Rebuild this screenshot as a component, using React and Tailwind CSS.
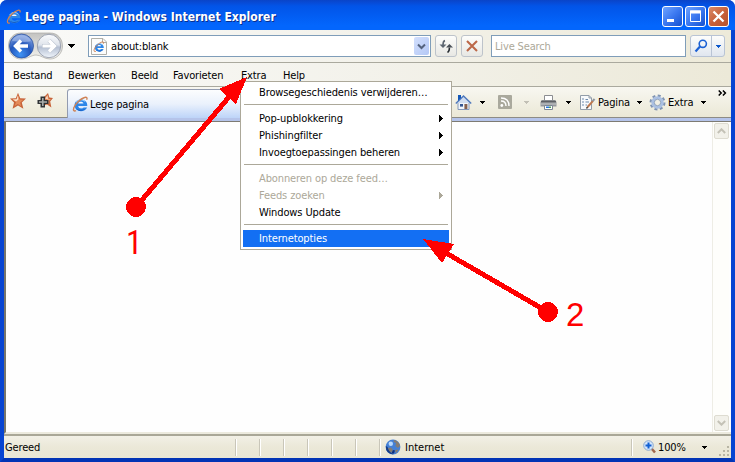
import React from 'react';

function IELogo({ className = '' }) {
  return (
    <svg className={`shrink-0 ${className}`} viewBox="0 0 16 16" fill="none">
      <path d="M14.4 9.3H5.8C6 12 9.8 12.2 10.9 10.8H14.2C12.4 15.8 2.6 15.6 2.4 8.8C2.4 1.4 14.8 1.2 14.4 9.3Z" fill="#2d86e8" />
      <path d="M3.2 11C4.6 14.6 11 15 13.2 11.6C10.6 13.6 5.6 13.6 3.2 11Z" fill="#175cc0" />
      <path d="M5.8 7.1H10.8C10.6 4.9 6.1 4.8 5.8 7.1Z" fill="#f4f8ff" />
      <path d="M3.8 6C5.6 2.8 10.4 2.8 12.4 5.2" stroke="#9bd2ff" strokeWidth="1" />
      <path d="M13.8 3.6C14.8 1.4 13.6.8 11.8 1.4C7.8 2.6 3 7.4 1.7 11C.9 13.6 1.8 14.6 3.8 13.8" stroke="#cf8254" strokeWidth="1.3" />
    </svg>
  );
}

function Down({ className = 'text-black' }) {
  return (
    <svg className={`h-[3px] w-[5px] shrink-0 ${className}`} viewBox="0 0 5 3" shapeRendering="crispEdges">
      <path d="M0 0H5V1H4V2H3V3H2V2H1V1H0Z" fill="currentColor" />
    </svg>
  );
}

function BigDown({ className = '' }) {
  return (
    <svg className={`h-[4px] w-[7px] shrink-0 ${className}`} viewBox="0 0 7 4" shapeRendering="crispEdges">
      <path d="M0 0H7V1H6V2H5V3H4V4H3V3H2V2H1V1H0Z" fill="currentColor" />
    </svg>
  );
}

function Star({ add }) {
  return (
    <svg className="h-[18px] w-[18px] shrink-0" viewBox="0 0 18 18">
      {add ? (
        <>
          <path d="M12 1L13.4 5.6L17 6L14.2 9.4L15.4 15.4L11 12.6L6 14L7 6Z" fill="#c8643a" />
          <path d="M12 3.4L12.6 7H15L12.6 9L13.4 12.6L10.6 10Z" fill="#f0a778" />
          <path d="M11.6 3L12 7L9.4 7.6L9.4 6Z" fill="#f8d7bd" />
          <path d="M4.5 4.5H9V8H12.5V12H9V15.5H4.5V12H1.5V8H4.5Z" fill="#2f3235" />
          <path d="M6 6H7.6V9.2H11V10.8H7.6V14H6V10.8H3V9.2H6Z" fill="#a9adab" />
        </>
      ) : (
        <>
          <path d="M9 .8L11.2 6.2L17 6.6L12.8 10.4L14.4 16.8L9 13.6L3.6 16.8L5 10.6L1 6.6L6.8 6.2Z" fill="#c8643a" />
          <path d="M9 3L10.4 7.4L14.4 7.7L11.2 10.4L12.2 14.2L8.8 12L5.6 14L7 10L3.6 7.6L7.6 7.3Z" fill="#e38a59" />
          <path d="M3.6 7.4L7.6 7.3L9 3.2L9.4 7.4L7 9.4Z" fill="#fbe0ca" />
        </>
      )}
    </svg>
  );
}

function TitleButton({ close, children }) {
  return (
    <div className={`flex h-[21px] w-[21px] items-center justify-center rounded-[3px] border border-white ${close ? 'bg-linear-to-br from-[#d98a68] via-[#c8613b] to-[#b5532e]' : 'bg-linear-to-br from-[#6fa3ff] via-[#3b78f0] to-[#1450cf]'}`}>
      <svg className="h-[19px] w-[19px]" viewBox="0 0 19 19" fill="none">{children}</svg>
    </div>
  );
}

function TitleBar() {
  return (
    <div className="flex h-[30px] shrink-0 items-center bg-linear-to-b from-[#0a44c8] from-0% via-[#0254e8] via-20% to-[#0366fd] to-85% pl-[6px] pr-[6px] pt-[3px]">
      <IELogo className="h-[16px] w-[16px]" />
      <div className="ml-[3px] flex-1 whitespace-nowrap pt-px font-['DejaVu_Sans_Condensed','DejaVu_Sans',sans-serif] text-[12px] font-bold leading-[16px] tracking-[0.03px] text-white [text-shadow:1px_1px_0_#0a2f8c] [font-stretch:condensed]">
        Lege pagina - Windows Internet Explorer
      </div>
      <div className="flex gap-[2px]">
        <TitleButton><path d="M4 13.5H11" stroke="white" strokeWidth="3" /></TitleButton>
        <TitleButton><path d="M4.5 4H14.5V14.5H4.5Z" stroke="white" /><path d="M4 5H15" stroke="white" strokeWidth="3" /></TitleButton>
        <TitleButton close><path d="M4.5 4.5L14.5 14.5M14.5 4.5L4.5 14.5" stroke="white" strokeWidth="2.3" /></TitleButton>
      </div>
    </div>
  );
}

function NavButtons() {
  return (
    <svg className="h-[28px] w-[56px] shrink-0" viewBox="0 0 56 28" fill="none">
      <defs>
        <radialGradient id="back" cx=".45" cy=".85" r=".8">
          <stop stopColor="#3f93f5" /><stop offset=".55" stopColor="#2357bd" /><stop offset="1" stopColor="#7f9fdd" />
        </radialGradient>
        <linearGradient id="fwd" x1="0" y1="0" x2="0" y2="1">
          <stop stopColor="#fbfcfd" /><stop offset=".45" stopColor="#dfe4ec" /><stop offset=".55" stopColor="#b4bfd2" /><stop offset="1" stopColor="#f1f6fc" />
        </linearGradient>
        <linearGradient id="tray" x1="0" y1="0" x2="0" y2="1">
          <stop stopColor="#c3c3c1" /><stop offset="1" stopColor="#f3f2ed" />
        </linearGradient>
      </defs>
      <path d="M13 1H42C50 1 54.5 7 54.5 14C54.5 21 49 27 42 27C36 27 33 23 28 23C23 23 20 27 13 27C6 27 .5 21 .5 14C.5 7 5 1 13 1Z" fill="url(#tray)" stroke="#aaaaa8" strokeWidth=".7" />
      <circle cx="13.5" cy="14" r="12" fill="url(#back)" stroke="#20479a" strokeWidth=".7" />
      <path d="M4 9C7 2 19 1 23 9C18 11 9 9 4 9Z" fill="#c5d4f3" opacity=".45" />
      <path d="M20 14H8M13 8.5L7.5 14L13 19.5" stroke="white" strokeWidth="3.4" />
      <circle cx="41" cy="14" r="11.7" fill="url(#fwd)" stroke="#8b93a3" strokeWidth=".8" />
      <path d="M34 14H46M41 8.5L46.5 14L41 19.5" stroke="#b3bccb" strokeWidth="4.2" />
      <path d="M34.5 14H46M41 8.5L46.5 14L41 19.5" stroke="white" strokeWidth="3.2" />
    </svg>
  );
}

function ToolButton({ children }) {
  return (
    <div className="flex h-[22px] w-[22px] items-center justify-center rounded-[3px] border border-[#bdc3ca] bg-linear-to-b from-[#fdfdfb] to-[#e8e8e4]">
      {children}
    </div>
  );
}

function NavBar() {
  return (
    <div className="flex h-[33px] shrink-0 items-center border-b border-[#aaa99e] bg-linear-to-r from-[#fafaf8] via-[#f3f2eb] to-[#edead9] pl-[4px] pr-[6px]">
      <NavButtons />
      <BigDown className="ml-[4px] text-black" />
      <div className="ml-[13px] flex h-[22px] w-[343px] items-center border border-[#7f9db9] bg-white pl-[2px] pr-px">
        <div className="grid h-[17px] w-[16px] shrink-0 place-items-center">
          <svg className="col-start-1 row-start-1 h-[17px] w-[16px]" viewBox="0 0 16 17" fill="none">
            <path d="M.5.5H12L15.5 4V16.5H.5Z" fill="#fcfcfb" stroke="#b0b0aa" /><path d="M11.5.5V4.5H15.5" stroke="#b0b0aa" />
          </svg>
          <IELogo className="col-start-1 row-start-1 mr-px mt-[2px] h-[12px] w-[12px]" />
        </div>
        <span className="ml-[4px] flex-1">about:blank</span>
        <div className="flex h-[18px] w-[15px] items-center justify-center rounded-[2px] bg-linear-to-br from-[#d2dffd] to-[#b4c8f5]">
          <svg className="h-[7px] w-[9px]" viewBox="0 0 9 7"><path d="M1 1.5L4.5 5L8 1.5" fill="none" stroke="#55637e" strokeWidth="2" /></svg>
        </div>
      </div>
      <div className="ml-[4px] flex gap-[4px]">
        <ToolButton>
          <svg className="h-[18px] w-[18px]" viewBox="0 0 18 18" fill="none">
            <path d="M8 3.6C6.4 4 6 5 6 8" stroke="#5d6670" strokeWidth="1.6" /><path d="M2.5 7.5H9.5L6 11Z" fill="#5d6670" />
            <path d="M10.4 15.2C12 14.8 12.4 13 12.4 10.5" stroke="#272c31" strokeWidth="1.6" /><path d="M9 10.5H16L12.4 7Z" fill="#4a5057" />
          </svg>
        </ToolButton>
        <ToolButton>
          <svg className="h-[14px] w-[14px]" viewBox="0 0 14 14"><path d="M2 2L12 12M12 2L2 12" fill="none" stroke="#bc6848" strokeWidth="2.1" /></svg>
        </ToolButton>
      </div>
      <div className="ml-[8px] flex h-[22px] w-[195px] items-center border border-[#7f9db9] bg-white pl-[3px] text-[#aca899]">Live Search</div>
      <div className="ml-[4px] flex h-[22px] w-[35px] items-center rounded-[3px] border border-[#b9c4d5] bg-linear-to-b from-[#fdfdfb] to-[#e0e6ef]">
        <div className="flex h-full w-[21px] items-center justify-center border-r border-[#b9c4d5]">
          <svg className="h-[14px] w-[14px]" viewBox="0 0 14 14" fill="none" stroke="#1c61d4"><circle cx="8.8" cy="4.8" r="3.6" strokeWidth="1.6" /><path d="M6 7.5L1.5 12.5" strokeWidth="2.2" /></svg>
        </div>
        <div className="flex flex-1 justify-center"><Down className="text-[#0b57cc]" /></div>
      </div>
    </div>
  );
}

function MenuBar() {
  return (
    <div className="flex h-[24px] shrink-0 items-center border-b border-[#aaa99e] bg-linear-to-r from-[#fafaf8] via-[#f3f2eb] to-[#ece9d8] pl-[9px] pt-px">
      <span className="w-[55px]">Bestand</span>
      <span className="w-[63px]">Bewerken</span>
      <span className="w-[42px]">Beeld</span>
      <span className="w-[68px]">Favorieten</span>
      <span className="w-[42px]">Extra</span>
      <span>Help</span>
    </div>
  );
}

function TabBar() {
  return (
    <div className="flex h-[35px] shrink-0 border-b border-[#7d7b73] bg-[#b5c4ea] pb-[3px]">
      <div className="flex flex-1 border-b border-[#8d8c85] bg-linear-to-b from-[#f8f7f1] to-[#ebe8d6] pl-[5px]">
        <div className="flex items-start gap-[9px] pt-[5px]"><Star /><Star add /></div>
        <div className="ml-[13px] mt-[2px] flex h-[29px] w-[184px] items-center rounded-t-[3px] border border-b-0 border-[#929bb0] bg-linear-to-b from-[#fcfdfe] via-[#eaf1fc] to-[#bdd4f8] pl-[4px]">
          <IELogo className="h-[17px] w-[17px]" />
          <span className="ml-[1px]">Lege pagina</span>
        </div>
        <div className="ml-[204px] flex h-[30px] items-center">
          <svg className="h-[17px] w-[17px] shrink-0" viewBox="0 0 17 17" fill="none">
            <path d="M3 8H14V15.5H3Z" fill="#f1f5fb" stroke="#8498ba" />
            <path d="M8.5 2L16 9H1Z" fill="#cfdcf0" /><path d="M.8 9.5L8.5 2L16.2 9.5" stroke="#4f78bb" strokeWidth="1.4" />
            <path d="M3 1H6V4L3 7Z" fill="#1457b7" /><path d="M5 10H8V12.6H5Z" fill="#345692" /><path d="M9.4 10H12.4V15H9.4Z" fill="#84604f" />
          </svg>
          <Down className="ml-[8px] text-black" />
          <svg className="ml-[13px] h-[14px] w-[14px] shrink-0" viewBox="0 0 14 14" fill="none">
            <rect width="14" height="14" rx="1" fill="#aaa99d" /><circle cx="3.8" cy="10.5" r="1.4" fill="white" /><path d="M3 6C6 6 8 8 8 11M3 3C8 3 11 6 11 11" stroke="white" strokeWidth="1.4" />
          </svg>
          <Down className="ml-[12px] text-[#c2c0b5]" />
          <svg className="ml-[11px] h-[17px] w-[17px] shrink-0" viewBox="0 0 17 17" fill="none">
            <path d="M4.5 6V1.5H12.5V6" fill="white" stroke="#8b8d91" /><path d="M2 6H15L16.5 8V12.5H.5V8Z" fill="#96999d" /><path d="M1 7.5H16" stroke="#5d6065" strokeWidth="1.6" /><path d="M1 10H16" stroke="#c5c7c9" /><path d="M4.5 11.5H12.5V15.5H4.5Z" fill="white" stroke="#7c8795" /><path d="M6 12.5H9V14H6Z" fill="#2876de" /><path d="M9 12.5H11V14H9Z" fill="#4ba05a" />
          </svg>
          <Down className="ml-[9px] text-black" />
          <svg className="ml-[8px] h-[17px] w-[17px] shrink-0" viewBox="0 0 17 17" fill="none">
            <path d="M1.5 1.5H10L12.5 4V15.5H1.5Z" fill="#f8fafc" stroke="#929da9" /><path d="M10 1.5V4H12.5" stroke="#929da9" /><path d="M3 5H5M3 8H5M3 11H5M6.5 5.5H9M6.5 8H10M6.5 11H8" stroke="#6e8bad" /><path d="M8.6 13L14 6.8" stroke="#be784e" strokeWidth="2" /><path d="M13.6 7.2L15.6 5" stroke="#8f969e" strokeWidth="2" /><path d="M7.5 14.5L8.6 12.8" stroke="#4a4038" strokeWidth="1.4" />
          </svg>
          <span className="ml-[2px] w-[39px]">Pagina</span>
          <Down />
          <svg className="ml-[7px] h-[17px] w-[17px] shrink-0" viewBox="0 0 17 17" fill="none">
            <circle cx="8.5" cy="8.5" r="6.9" stroke="#8094b2" strokeWidth="2.2" strokeDasharray="3 2.42" />
            <circle cx="8.5" cy="8.5" r="4.8" fill="#f1efe4" stroke="#abc0e2" strokeWidth="2.8" /><circle cx="8.5" cy="8.5" r="3.2" stroke="#7991b3" strokeWidth=".8" />
          </svg>
          <span className="ml-[2px] w-[33px]">Extra</span>
          <Down />
        </div>
        <svg className="ml-[12px] mt-[3px] h-[6px] w-[9px] shrink-0" viewBox="0 0 9 6" fill="none" stroke="black" strokeWidth="1.5"><path d="M.7.5L3.2 3L.7 5.5M4.9.5L7.4 3L4.9 5.5" /></svg>
      </div>
    </div>
  );
}

function ScrollButton({ up }) {
  return (
    <div className="flex h-[16px] w-[15px] items-center justify-center rounded-[2px] border border-[#dedcd1] bg-[#f2f1ea]">
      <svg className={`h-[6px] w-[9px] ${up ? '' : 'rotate-180'}`} viewBox="0 0 9 6"><path d="M.8 5L4.5 1.3L8.2 5" fill="none" stroke="#c4c2b7" strokeWidth="2" /></svg>
    </div>
  );
}

function StatusBar() {
  return (
    <div className="flex h-[24px] shrink-0 items-center border-t-2 border-[#a9a797] bg-linear-to-b from-[#f2f0e6] via-[#ebe8d8] to-[#e9e6d5]">
      <span className="w-[231px] pl-[1px] pt-px">Gereed</span>
      {[0, 1, 2, 3, 4, 5, 6].map((n) => (
        <span key={n} className="h-[17px] w-[24px] shrink-0 border-l border-[#c9c6b9] shadow-[inset_1px_0_0_white]" />
      ))}
      <svg className="-ml-[18px] h-[16px] w-[16px] shrink-0" viewBox="0 0 16 16">
        <circle cx="8" cy="8" r="7.4" fill="#4480d6" /><path d="M9 1Q14 2 15 7L13 9L10.4 7L11 4L8.6 3ZM3 9L6 8.6L8 11L6 14Q3 12 3 9ZM10 11L13.6 10.6L11 14.4Z" fill="#857c72" /><path d="M.8 7Q.6 15 8.6 15.4Q3.4 13 2.6 8Z" fill="#153c87" /><path d="M8 11L10 11.4L9 14.6L6.4 14.4Z" fill="#12307a" /><circle cx="5.8" cy="4.8" r="2.2" fill="#b9daff" />
      </svg>
      <span className="ml-[4px] w-[226px] pt-px tracking-normal">Internet</span>
      <span className="h-[17px] w-[12px] border-l border-[#c9c6b9] shadow-[inset_1px_0_0_white]" />
      <svg className="h-[14px] w-[13px] shrink-0" viewBox="0 0 13 14" fill="none"><path d="M8.5 8.5L12 12.5" stroke="#a2684d" strokeWidth="2.5" /><circle cx="5.5" cy="5.5" r="4.8" fill="#d3e5fc" stroke="#8ba9cf" /><path d="M5.5 2.5V8.5M2.5 5.5H8.5" stroke="#1260d2" strokeWidth="2" /></svg>
      <span className="ml-[2px] w-[44px] pt-px">100%</span>
      <Down />
      <svg className="ml-auto mr-[1px] mt-[9px] h-[12px] w-[12px]" viewBox="0 0 12 12" fill="#b8b5a4"><path d="M9 0h2v2H9zM5 4h2v2H5zM9 4h2v2H9zM1 8h2v2H1zM5 8h2v2H5zM9 8h2v2H9z" /></svg>
    </div>
  );
}

function MenuItem({ label, sub, disabled, selected }) {
  return (
    <div className={`flex h-[17px] items-center pl-[16px] pr-[6px] ${selected ? 'bg-[#136ff3] text-white' : disabled ? 'text-[#aca899]' : 'text-black'}`}>
      <span className="flex-1">{label}</span>
      {sub && <svg className="h-[7px] w-[4px]" viewBox="0 0 4 7" shapeRendering="crispEdges"><path d="M0 0H1V1H2V2H3V3H4V4H3V5H2V6H1V7H0Z" fill="currentColor" /></svg>}
    </div>
  );
}

const Divider = () => <div className="mx-px mb-[5px] mt-[3px] h-px bg-[#aca899]" />;

function ExtraMenu() {
  return (
    <div className="absolute left-[240px] top-[81px] h-[169px] w-[212px] border border-[#aca899] bg-white px-[2px] pt-[2px] tracking-[-0.11px]">
      <MenuItem label="Browsegeschiedenis verwijderen…" />
      <Divider />
      <MenuItem label="Pop-upblokkering" sub />
      <MenuItem label="Phishingfilter" sub />
      <MenuItem label="Invoegtoepassingen beheren" sub />
      <Divider />
      <MenuItem label="Abonneren op deze feed…" disabled />
      <MenuItem label="Feeds zoeken" disabled sub />
      <MenuItem label="Windows Update" />
      <Divider />
      <MenuItem label="Internetopties" selected />
    </div>
  );
}

function Annotations() {
  return (
    <>
      <svg className="absolute left-0 top-0 h-[462px] w-[735px]" viewBox="0 0 735 462" fill="#ff0000" shapeRendering="crispEdges">
        <path d="M136 207L229 97M548 312L446 253" stroke="#ff0000" strokeWidth="5" />
        <path d="M247 77L236 104L219 89ZM423 239L454 244L442 263Z" />
        <circle cx="136" cy="207" r="10" /><circle cx="548" cy="312" r="10" />
      </svg>
      <div className="absolute left-[126px] top-[226px] font-[Roboto,sans-serif] text-[33px] font-normal leading-[33px] tracking-normal text-[#ff0000]">1</div>
      <div className="absolute left-[566px] top-[298px] font-['Liberation_Sans',sans-serif] text-[33px] font-normal leading-[33px] tracking-normal text-[#ff0000]">2</div>
    </>
  );
}

export default function App() {
  return (
    <div className="relative flex h-[462px] w-[735px] flex-col overflow-hidden whitespace-nowrap rounded-t-[7px] bg-[#0755e8] font-['DejaVu_Sans_Condensed','DejaVu_Sans',sans-serif] text-[11px] leading-[13px] tracking-[-0.15px] text-black [font-stretch:condensed]">
      <TitleBar />
      <div className="flex min-h-0 flex-1 flex-col border-x-4 border-b-4 border-[#0744d2] border-b-[#0234b5]">
        <NavBar />
        <MenuBar />
        <TabBar />
        <div className="flex min-h-0 flex-1 border-b-2 border-l-2 border-[#eceade] border-l-[#77756c] bg-[#fefefe]">
          <div className="flex-1" />
          <div className="mr-[2px] flex w-[17px] flex-col items-center justify-between border-l border-[#eeede5] bg-[#fefefb] py-px"><ScrollButton up /><ScrollButton /></div>
        </div>
        <StatusBar />
      </div>
      <ExtraMenu />
      <Annotations />
    </div>
  );
}
